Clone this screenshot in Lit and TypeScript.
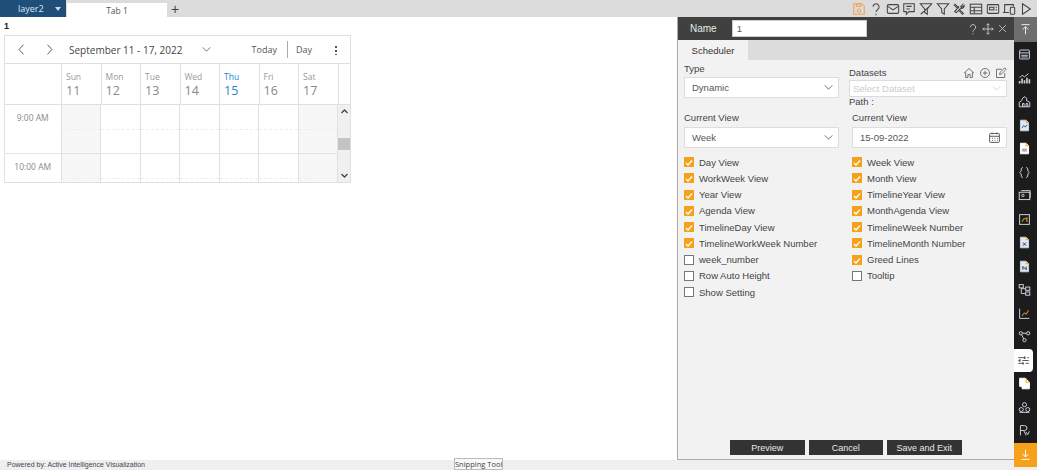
import { LitElement, html, css, svg } from "lit";
import { customElement } from "lit/decorators.js";

const ic = (body: unknown, size = 14, cls = "") => html`<svg class="ic ${cls}" width=${size} height=${size} viewBox="0 0 16 16" fill="none" stroke="currentColor" stroke-width="1.2">${body}</svg>`;

const top = [
  svg`<path d="M2 2h9l3 3v9H2z"/><rect x="5" y="2" width="5" height="3"/><circle cx="8" cy="10" r="2"/>`,
  svg`<path d="M4.500 5.500a3.500 3.500 0 1 1 5.500 3c-1.300.8-2 1.500-2 3M8 13.500v1.500"/>`,
  svg`<rect x="1.500" y="3" width="13" height="10" rx="1.500"/><path d="M2 5l6 4 6-4"/>`,
  svg`<path d="M2 2h12v9H8l-3 3v-3H2z"/><path d="M5 5h6M5 8h4"/>`,
  svg`<path d="M1.500 2h13L9.500 8v6l-3-2V8zM2 14L14 3"/>`,
  svg`<path d="M1.500 2h13L9.500 8v6l-3-2V8z"/>`,
  svg`<path d="M3 2l5 5M2 3l4 4M13 2l-3 3 1 1 3-2c0 2-2 4-4 3l-5 5-2-1 5-6M9 9l4 4-1 1-4-4"/>`,
  svg`<rect x="1.500" y="2.500" width="13" height="11"/><path d="M1.500 6h13M1.500 10h13M6 6v7.500"/>`,
  svg`<rect x="1.500" y="3" width="13" height="10" rx="1"/><rect x="4" y="6" width="5" height="3"/><path d="M11 6h1.500M11 9h1.500"/>`,
  svg`<path d="M1 12h7M3 12V3h10v2"/><rect x="9.500" y="6" width="5" height="8" rx="1"/>`,
  svg`<path d="M4 2l9 6-9 6z"/>`,
];

const rail = [
  svg`<rect x="2" y="2.500" width="12" height="11" rx="1"/><path d="M2 6h12M4 9h8M4 11h8"/>`,
  svg`<path d="M2 14v-3M5 14V8M8 14v-4M11 14V7M14 14v-5" stroke-width="2"/><path d="M2 7l3-3 3 2 5-4"/>`,
  svg`<path d="M1.500 14.500V9l3-2 1-3 3-2 2 2v3l4 2v5.500zM5.500 14.500v-4h2v4M10 14.500v-4h2v4"/>`,
  svg`<path d="M3 1.500h7l3 3v10H3z" fill="#dfe9f5"/><path d="M5 11l2-3 2 2 2-3" stroke="#2b5c96"/><path d="M10 1.500v3h3" stroke="#f7a11a"/>`,
  svg`<path d="M3 1.500h7l3 3v10H3z" fill="#fff" stroke="#fff"/><path d="M5 9h6M5 11h6" stroke="#888"/><path d="M10 1.500v3h3" stroke="#f7a11a"/>`,
  svg`<path d="M6 2C4 2 4 3 4 5s-2 3-2 3 2 1 2 3 0 3 2 3M10 2c2 0 2 1 2 3s2 3 2 3-2 1-2 3 0 3-2 3"/>`,
  svg`<rect x="1.500" y="4" width="13" height="9"/><path d="M4 2h11v9"/><circle cx="6" cy="8" r="1.500"/>`,
  svg`<rect x="2" y="2" width="12" height="12"/><path d="M5 11l2-4h4M11 5v6" stroke="#f7a11a"/>`,
  svg`<path d="M3 1.500h7l3 3v10H3z" fill="#dfe9f5"/><path d="M6 8l4 4M10 8l-4 4" stroke="#333"/><path d="M10 1.500v3h3" stroke="#f7a11a"/>`,
  svg`<path d="M3 1.500h7l3 3v10H3z" fill="#dfe9f5"/><path d="M6 12V8l4 4V8" stroke="#333"/><path d="M10 1.500v3h3" stroke="#f7a11a"/>`,
  svg`<rect x="1.500" y="2" width="5" height="4"/><rect x="9.500" y="5" width="5" height="4"/><rect x="9.500" y="11" width="5" height="4"/><path d="M4 6v7h5.500M4 7h5.500"/>`,
  svg`<path d="M2 2v12h12" /><path d="M5 11l3-4 2 2 3-5" stroke="#f7a11a"/>`,
  svg`<circle cx="3.500" cy="4" r="2"/><circle cx="12.500" cy="4" r="2"/><circle cx="8" cy="12.500" r="2"/><path d="M5.500 4h5M4.500 6l2.500 5"/>`,
  svg`<path d="M1.500 4.500h8M12.500 4.500h2M1.500 8h2M6.500 8h8M1.500 11.500h6M10.500 11.500h4"/><path d="M9.500 3v3M3.500 6.500v3M7.500 10v3" stroke-width="1.800"/>`,
  svg`<path d="M2 1.500h7l5 5v8H5v-3H2z" fill="#fff" stroke="#fff"/><path d="M10 1.500v5h4" stroke="#f7a11a"/>`,
  svg`<circle cx="8" cy="4.500" r="2.500"/><circle cx="4" cy="10.500" r="2.500"/><circle cx="12" cy="10.500" r="2.500"/><path d="M2 14h12"/>`,
  svg`<path d="M3 14V2h5a3 3 0 0 1 0 6H3M7 8l3 6M10 10l2 3 2-4" />`,
];

const days = [["Sun", 11], ["Mon", 12], ["Tue", 13], ["Wed", 14], ["Thu", 15], ["Fri", 16], ["Sat", 17]] as const;
const left: [string, boolean][] = [["Day View", true], ["WorkWeek View", true], ["Year View", true], ["Agenda View", true], ["TimelineDay View", true], ["TimelineWorkWeek Number", true], ["week_number", false], ["Row Auto Height", false], ["Show Setting", false]];
const right: [string, boolean][] = [["Week View", true], ["Month View", true], ["TimelineYear View", true], ["MonthAgenda View", true], ["TimelineWeek Number", true], ["TimelineMonth Number", true], ["Greed Lines", true], ["Tooltip", false]];

const chev = html`<svg class="chev" width="9" height="5" viewBox="0 0 10 6" fill="none" stroke="currentColor"><path d="M.5.500L5 5 9.500.500"/></svg>`;

@customElement("app-root")
export class AppRoot extends LitElement {
  static styles = css`
    :host { display: block; width: 1037px; height: 470px; position: relative; overflow: hidden; background: #fff; font-family: "Liberation Sans", Arial, sans-serif; color: #444; }
    * { box-sizing: border-box; }
    .ic { display: block; flex: none; }
    .tabbar { height: 17px; background: #dcdcdc; display: flex; align-items: stretch; }
    .layer { width: 66px; background: #1f4e79; color: #dfe6ee; font-size: 9px; font-family: "Open Sans", sans-serif; display: flex; align-items: center; padding: 0 5px 0 18px; justify-content: space-between; }
    .tri { width: 0; height: 0; border: 3px solid transparent; border-top: 4px solid #cdd8e4; border-bottom: 0; }
    .tab { width: 100px; margin-left: 1px; margin-top: 3px; background: #fff; font-size: 8.500px; font-family: "Open Sans", sans-serif; color: #555; display: flex; align-items: center; justify-content: center; }
    .plus { margin-left: 3px; width: 10px; font-size: 14px; color: #444; display: flex; align-items: center; justify-content: center; }
    .tools { margin-left: auto; display: flex; align-items: center; gap: 2.700px; color: #444; padding-right: 4px; }
    .tools .ic:first-child { color: #f2a24a; }
    .body { display: flex; height: 443px; }
    .canvas { width: 677px; padding: 4px 4px 0; }
    .widget-title { font-size: 9px; font-weight: 700; color: #222; line-height: 10px; height: 14px; }
    .cal { width: 347px; height: 148px; border: 1px solid #e0e0e0; display: flex; flex-direction: column; color: #666; font-family: "Open Sans", sans-serif; }
    .cal-head { height: 28px; flex: none; border-bottom: 1px solid #e0e0e0; display: flex; align-items: center; padding-left: 10px; position: relative; color: #555; }
    .cal-range { margin-left: 13px; font-size: 10px; color: #444; width: 133px; white-space: nowrap; }
    .nav { margin-right: 15px; }
    .today { margin-left: auto; font-size: 9px; color: #555; padding-right: 10px; border-right: 1px solid #aaa; height: 17px; line-height: 18px; }
    .day { font-size: 9px; color: #555; padding-left: 8px; width: 47px; }
    .dots { width: 2px; height: 10px; margin-right: 13px; background: radial-gradient(circle, #555 1px, transparent 1.100px) 0 0 / 2px 4px; }
    .row { display: flex; flex: none; }
    .hdr { height: 41px; border-bottom: 1px solid #e0e0e0; }
    .timecol { width: 57px; flex: none; border-right: 1px solid #e0e0e0; }
    .d { width: 39.500px; flex: none; border-right: 1px solid #e0e0e0; padding: 7px 0 0 4px; }
    .d .n { font-size: 8.500px; color: #999; line-height: 11px; }
    .d .v { font-size: 12.500px; color: #888; line-height: 17px; }
    .d.cur .n, .d.cur .v { color: #1a84d0; }
    .gridarea { flex: 1; display: flex; min-height: 0; overflow: hidden; }
    .cells { flex: 1; overflow: hidden; }
    .slot { height: 24.500px; }
    .slot.major { border-bottom: 1px solid #e4e4e4; }
    .slot.minor { border-bottom: 1px dashed #eee; }
    .t { font-size: 8.500px; color: #888; text-align: center; padding: 7px 0 0; height: 49px; border-right: 1px solid #e0e0e0; border-bottom: 1px solid #e4e4e4; width: 57px; }
    .c { width: 39.500px; flex: none; border-right: 1px solid #e0e0e0; }
    .c.w { background: #f7f7f7; }
    .sb { width: 12px; flex: none; background: #f0f0f0; display: flex; flex-direction: column; align-items: center; justify-content: space-between; color: #444; }
    .thumb { width: 12px; height: 12px; background: #c4c4c4; }
    .sb svg { margin: 4px 0; }
    .panel { width: 337px; background: #f2f2f2; border-left: 1px solid #aaa; border-bottom: 1px solid #aaa; display: flex; flex-direction: column; }
    .namebar { height: 23px; background: #404040; color: #e8e8e8; display: flex; align-items: center; padding: 0 6px 0 12px; font-size: 10px; flex: none; }
    .namebar input { margin-left: 15px; width: 135px; height: 17px; border: 1px solid #ccc; background: #fff; font: 9.500px "Liberation Sans", Arial, sans-serif; padding: 0 4px; color: #555; }
    .namebar .acts { margin-left: auto; display: flex; gap: 3px; color: #ccc; align-items: center; }
    .tabs { height: 20px; background: #dcdcdc; flex: none; }
    .tabs span { display: flex; width: 70px; height: 20px; background: #f2f2f2; align-items: center; justify-content: center; font-size: 9.500px; color: #333; }
    .form { flex: 1; display: grid; grid-template-columns: 155px 155px; column-gap: 13px; padding: 3px 0 0 6px; align-content: start; position: relative; }
    .col { display: flex; flex-direction: column; }
    .lbl { font-size: 9.500px; color: #444; line-height: 12px; }
    .sel { background: #fff; border: 1px solid #ddd; display: flex; align-items: center; justify-content: space-between; padding: 0 5px 0 7px; font-size: 9.500px; color: #555; height: 21px; margin-top: 2px; }
    .sel2 { margin-top: 3px; }
    .ds { margin-left: -3px; width: 158px; }
    .dshead { display: flex; justify-content: space-between; align-items: center; height: 15px; margin-top: 2px; color: #666; }
    .dsicons { display: flex; gap: 4px; }
    .sel.ph { height: 17px; margin-top: 0; color: #ccc; padding-left: 3px; border-color: #d8dce6; }
    .path { font-size: 9.500px; color: #444; line-height: 10px; }
    .cv { margin-top: 14px; }
    .cvr { margin-top: -9px; }
    .checks { display: flex; flex-direction: column; margin-top: 6px; }
    .ck { display: flex; align-items: center; height: 16.250px; font-size: 9.500px; color: #444; gap: 5px; white-space: nowrap; }
    .box { width: 10px; height: 10px; flex: none; border: 1px solid #777; background: #fff; display: block; }
    .box.on { background: #f7a11a; border-color: #f7a11a; }
    .btns { margin-top: auto; height: 15px; padding-left: 52px; display: flex; gap: 4px; margin-bottom: 4px; flex: none; }
    .btn { width: 74.500px; height: 15px; background: #333; color: #e8e8e8; font: 9px "Liberation Sans", Arial, sans-serif; display: flex; align-items: center; justify-content: center; border: 0; white-space: nowrap; padding: 0; }
    .rail { width: 23px; background: #1c1c1c; display: flex; flex-direction: column; color: #c9d3df; }
    .rtop { height: 25px; background: #6e6e6e; display: flex; align-items: center; justify-content: center; color: #eee; flex: none; margin-bottom: 1px; }
    .ri { height: 23.500px; display: flex; align-items: center; justify-content: center; flex: none; padding-right: 2px; }
    .ri.on { background: #fff; color: #555; width: 19px; padding-right: 0; border-radius: 0 4px 4px 0; }
    .rbot { margin-top: auto; height: 24px; background: #f7a11a; display: flex; align-items: center; justify-content: center; color: #fff; flex: none; }
    .foot { height: 10px; background: #efefef; font-size: 7px; color: #445; line-height: 10px; padding-left: 7px; }
    .snip { position: absolute; left: 454px; top: 458px; width: 49px; height: 12px; background: #f8f8f8; border: 1px solid #bbb; font: 7.500px/10px "Open Sans", sans-serif; color: #444; text-align: center; white-space: nowrap; }
  `;

  private check(label: string, on: boolean) {
    return html`<div class="ck"><span class="box ${on ? "on" : ""}">${on ? html`<svg class="tick" width="8" height="8" viewBox="0 0 8 8" fill="none" stroke="#fff" stroke-width="1.300"><path d="M1 4l2 2 4-4.500"/></svg>` : ""}</span>${label}</div>`;
  }

  render() {
    return html`
      <div class="tabbar">
        <div class="layer">layer2<span class="tri"></span></div>
        <div class="tab">Tab 1</div>
        <div class="plus">+</div>
        <div class="tools">${top.map((t) => ic(t, 14))}</div>
      </div>
      <div class="body">
        <div class="canvas">
          <div class="widget-title">1</div>
          <div class="cal">
            <div class="cal-head">
              ${ic(svg`<path d="M10.500 2L5 8l5.500 6"/>`, 13, "nav")}
              ${ic(svg`<path d="M5.500 2l5.500 6-5.500 6"/>`, 13)}
              <span class="cal-range">September 11 - 17, 2022</span>
              ${chev}
              <span class="today">Today</span>
              <span class="day">Day</span>
              <span class="dots"></span>
            </div>
            <div class="row hdr">
              <div class="timecol"></div>
              ${days.map(([n, v]) => html`<div class="d ${v === 15 ? "cur" : ""}"><div class="n">${n}</div><div class="v">${v}</div></div>`)}
            </div>
            <div class="gridarea">
              <div class="cells">
                ${["9:00 AM", "10:00 AM"].map((tm) => html`<div class="row">
                  <div class="t">${tm}</div>
                  ${days.map(([, v]) => html`<div class="c ${v === 11 || v === 17 ? "w" : ""}"><div class="slot minor"></div><div class="slot major"></div></div>`)}
                </div>`)}
              </div>
              <div class="sb">
                <svg width="7" height="5" viewBox="0 0 7 5" fill="none" stroke="currentColor" stroke-width="1.300"><path d="M.5 4l3-3 3 3"/></svg>
                <div class="thumb"></div>
                <svg width="7" height="5" viewBox="0 0 7 5" fill="none" stroke="currentColor" stroke-width="1.300"><path d="M.5 1l3 3 3-3"/></svg>
              </div>
            </div>
          </div>
        </div>
        <div class="panel">
          <div class="namebar">Name<input value="1" />
            <div class="acts">
              ${ic(svg`<path d="M4.500 5.500a3.500 3.500 0 1 1 5.500 3c-1.300.8-2 1.500-2 3M8 13.500v1.500"/>`, 12)}
              ${ic(svg`<path d="M8 1v14M1 8h14M6 3l2-2 2 2M6 13l2 2 2-2M3 6L1 8l2 2M13 6l2 2-2 2"/>`, 12)}
              ${ic(svg`<path d="M3 3l10 10M13 3L3 13"/>`, 11)}
            </div>
          </div>
          <div class="tabs"><span>Scheduler</span></div>
          <div class="form">
            <div class="col">
              <div class="lbl">Type</div>
              <div class="sel">Dynamic ${chev}</div>
              <div class="lbl cv">Current View</div>
              <div class="sel sel2">Week ${chev}</div>
            </div>
            <div class="col">
              <div class="ds">
                <div class="dshead"><span class="lbl">Datasets</span>
                  <span class="dsicons">
                    ${ic(svg`<path d="M1.500 8L8 2l6.500 6M3.500 7v7h3v-4h3v4h3V7"/>`, 12)}
                    ${ic(svg`<circle cx="8" cy="8" r="6"/><path d="M8 5v6M5 8h6"/>`, 12)}
                    ${ic(svg`<path d="M13 8v6H2V3h7M6 10l1-3 6-6 2 2-6 6z"/>`, 12)}
                  </span>
                </div>
                <div class="sel ph">Select Dataset ${chev}</div>
                <div class="path">Path :</div>
              </div>
              <div class="cvr">
                <div class="lbl cv">Current View</div>
                <div class="sel sel2">15-09-2022
                  ${ic(svg`<rect x="2" y="3" width="12" height="11" rx="1"/><path d="M2 6.500h12M5 2v2M11 2v2M5 9h1M8 9h1M11 9h1M5 11.500h1M8 11.500h1M11 11.500h1"/>`, 13)}
                </div>
              </div>
            </div>
            <div class="checks">${left.map(([l, o]) => this.check(l, o))}</div>
            <div class="checks">${right.map(([l, o]) => this.check(l, o))}</div>
          </div>
          <div class="btns">
            <button class="btn">Preview</button>
            <button class="btn">Cancel</button>
            <button class="btn">Save and Exit</button>
          </div>
        </div>
        <div class="rail">
          <div class="rtop">${ic(svg`<path d="M3 2h10M8 14V5M4.500 8L8 4.500 11.500 8"/>`, 13)}</div>
          ${rail.map((r, i) => html`<div class="ri ${i === 13 ? "on" : ""}">${ic(r, 13)}</div>`)}
          <div class="rbot">${ic(svg`<path d="M8 2v9M4.500 7.500L8 11l3.500-3.500M3 14h10"/>`, 13)}</div>
        </div>
      </div>
      <div class="foot">Powered by: Active Intelligence Visualization</div>
      <div class="snip">Snipping Tool</div>
    `;
  }
}
